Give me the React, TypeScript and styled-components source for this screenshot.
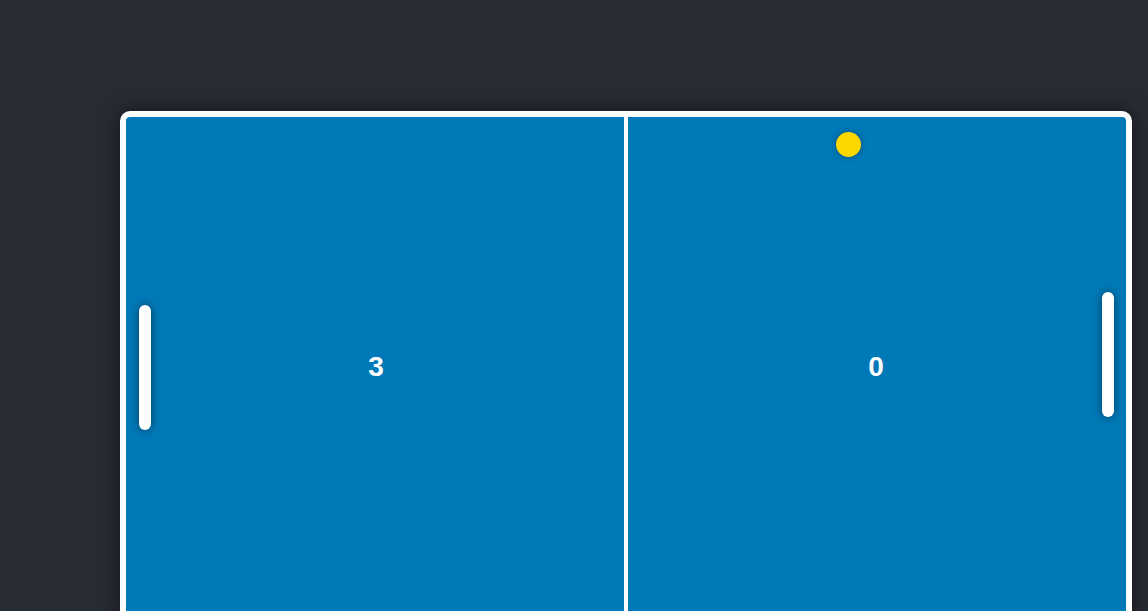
import React from "react";
import styled, { createGlobalStyle } from "styled-components";

const GlobalStyle = createGlobalStyle`
  html, body {
    margin: 0;
    padding: 0;
    background: #282c34;
    font-family: "Liberation Sans", Arial, sans-serif;
    overflow: hidden;
  }
`;

const Page = styled.div`
  min-height: 100vh;
  box-sizing: border-box;
  padding: 111px 0 0 120px;
  background: #282c34;
`;

const Board = styled.div`
  position: relative;
  width: 1000px;
  height: 500px;
  border: 6px solid #ffffff;
  border-radius: 10px;
  background: #0079b8;
  box-shadow: 0 0 24px rgba(0, 0, 0, 0.55);
  display: grid;
  grid-template-columns: 1fr 1fr;
  overflow: hidden;
`;

const Half = styled.div`
  display: flex;
  align-items: center;
  justify-content: center;
`;

const Score = styled.span`
  color: #ffffff;
  font-size: 28px;
  font-weight: 700;
  font-family: "Liberation Sans", Arial, sans-serif;
`;

const CenterLine = styled.div`
  position: absolute;
  top: 0;
  bottom: 0;
  left: 50%;
  width: 4px;
  transform: translateX(-50%);
  background: #ffffff;
`;

const Paddle = styled.div<{ $side: "left" | "right"; $top: number }>`
  position: absolute;
  ${(p) => (p.$side === "left" ? "left: 13px;" : "right: 12px;")}
  top: ${(p) => p.$top}px;
  width: 12px;
  height: 125px;
  border-radius: 6px;
  background: #ffffff;
  box-shadow: 0 0 10px rgba(0, 0, 0, 0.5);
`;

const Ball = styled.div`
  position: absolute;
  left: 710px;
  top: 15px;
  width: 25px;
  height: 25px;
  border-radius: 50%;
  background: #ffd700;
  box-shadow: 0 0 6px rgba(0, 0, 0, 0.35);
`;

export default function App() {
  return (
    <>
      <GlobalStyle />
      <Page>
        <Board>
          <Half>
            <Score>3</Score>
          </Half>
          <Half>
            <Score>0</Score>
          </Half>
          <CenterLine />
          <Paddle $side="left" $top={188} />
          <Paddle $side="right" $top={175} />
          <Ball />
        </Board>
      </Page>
    </>
  );
}
